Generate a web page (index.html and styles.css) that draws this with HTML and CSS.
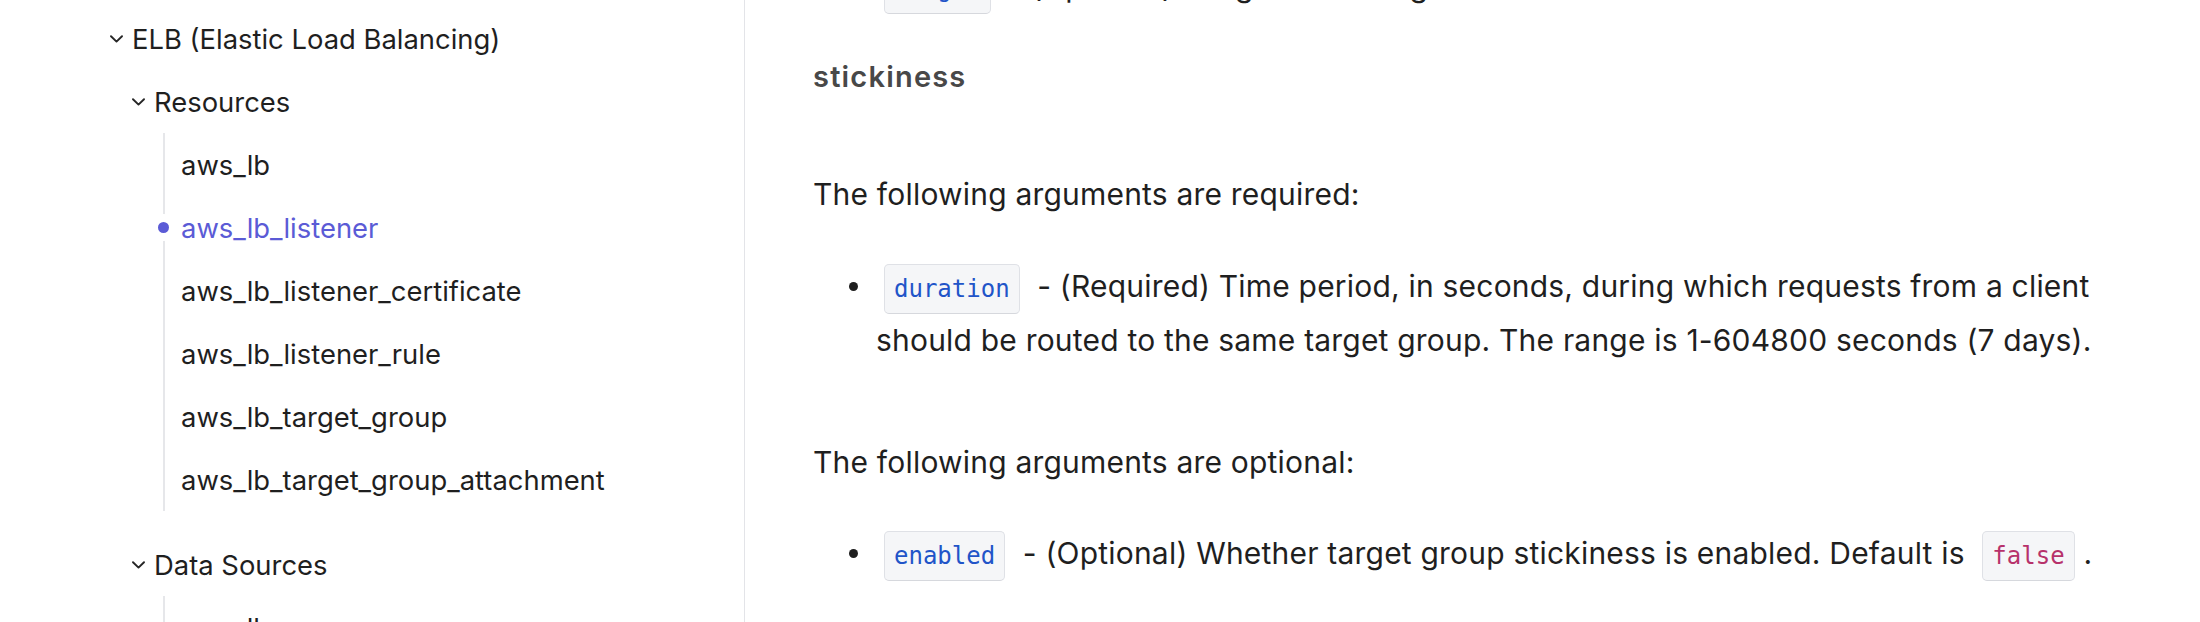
FILE: index.html
```html
<!DOCTYPE html>
<html lang="en">
<head>
<meta charset="utf-8">
<title>aws_lb_listener</title>
<link rel="stylesheet" href="styles.css">
</head>
<body>
<div class="layout">
  <aside class="sidebar">
    <ul class="tree">
      <li>
        <div class="node">
          <svg class="chev" viewBox="0 0 13 8"><path d="M1 1.2 L6.5 6.6 L12 1.2" /></svg>
          <span>ELB (Elastic Load Balancing)</span>
        </div>
        <ul class="sub">
          <li>
            <div class="node">
              <svg class="chev" viewBox="0 0 13 8"><path d="M1 1.2 L6.5 6.6 L12 1.2" /></svg>
              <span>Resources</span>
            </div>
            <ul class="leaves">
              <li>aws_lb</li>
              <li class="active">aws_lb_listener</li>
              <li>aws_lb_listener_certificate</li>
              <li>aws_lb_listener_rule</li>
              <li>aws_lb_target_group</li>
              <li>aws_lb_target_group_attachment</li>
            </ul>
          </li>
          <li>
            <div class="node">
              <svg class="chev" viewBox="0 0 13 8"><path d="M1 1.2 L6.5 6.6 L12 1.2" /></svg>
              <span>Data Sources</span>
            </div>
            <ul class="leaves">
              <li>aws_lb</li>
              <li>aws_lb_listener</li>
            </ul>
          </li>
        </ul>
      </li>
    </ul>
  </aside>
  <main class="content">
    <ul class="args prev">
      <li><span class="li-body"><code class="name">weight</code> - (Optional) Weight. The range is 0 to 999.</span></li>
    </ul>
    <h4 class="arg-head">stickiness</h4>
    <p class="para para-first">The following arguments are required:</p>
    <ul class="args args-req">
      <li><span class="li-body"><code class="name">duration</code> - (Required) Time period, in seconds, during which requests from a client should be routed to the same target group. The range is 1-604800 seconds (7 days).</span></li>
    </ul>
    <p class="para para-opt">The following arguments are optional:</p>
    <ul class="args args-opt">
      <li><span class="li-body"><code class="name">enabled</code> - (Optional) Whether target group stickiness is enabled. Default is <code class="value">false</code>.</span></li>
    </ul>
  </main>
</div>
</body>
</html>
```
FILE: styles.css
```css
html, body {
  margin: 0;
  padding: 0;
  background: #ffffff;
}

body {
  font-family: "Inter", "Noto Sans", sans-serif;
  color: #1f1f1f;
}

.layout {
  display: flex;
  height: 622px;
  overflow: hidden;
}

/* ---------- Sidebar ---------- */
.sidebar {
  width: 745px;
  flex-shrink: 0;
  box-sizing: border-box;
  border-right: 1px solid #e3e4e8;
  padding-top: 7px;
  overflow: hidden;
}

.tree,
.sub,
.leaves {
  list-style: none;
  margin: 0;
}

.tree {
  padding: 0 0 0 110px;
}

.sub {
  padding: 0 0 0 22px;
}

.node {
  display: flex;
  align-items: center;
  gap: 9px;
  height: 63px;
  font-size: 27.4px;
  color: #1f1f1f;
  white-space: nowrap;
}

.chev {
  width: 13px;
  height: 8px;
  flex-shrink: 0;
  fill: none;
  stroke: #262626;
  stroke-width: 1.9;
  stroke-linecap: round;
  stroke-linejoin: round;
}

.leaves {
  margin: 0 0 22px 31px;
  padding: 0 0 0 16px;
  border-left: 2px solid #e6e7ea;
}

.leaves li {
  position: relative;
  display: flex;
  align-items: center;
  height: 63px;
  font-size: 27.4px;
  color: #1f1f1f;
  white-space: nowrap;
}

.leaves li.active {
  color: #5b5bd6;
}

.leaves li.active::before {
  content: "";
  position: absolute;
  left: -23px;
  top: 26px;
  width: 11px;
  height: 11px;
  border-radius: 50%;
  background: #5b5bd6;
  box-shadow: 0 0 0 8px #ffffff;
}

/* ---------- Content ---------- */
.content {
  flex: 1;
  min-width: 0;
  padding: 0 68px;
  font-size: 30px;
  line-height: 54px;
  letter-spacing: 0.2px;
  color: #1f1f1f;
}

.args {
  list-style: none;
  margin: 0;
  padding: 0;
}

.args li {
  display: grid;
  grid-template-columns: 63px 1fr;
}

.args li::before {
  content: "";
  justify-self: start;
  margin-left: 36px;
  margin-top: 23px;
  width: 9px;
  height: 9px;
  border-radius: 50%;
  background: #1f1f1f;
}

.prev {
  margin-top: -41px;
}

.arg-head {
  margin: 43px 0 0;
  font-size: 29px;
  line-height: 42px;
  font-weight: 600;
  letter-spacing: 1.2px;
  color: #484848;
}

.para {
  margin: 0;
}

.para-first {
  margin-top: 69px;
}

.args-req {
  margin-top: 38px;
}

.para-opt {
  margin-top: 68px;
}

.args-opt {
  margin-top: 37px;
}

code {
  font-family: "DejaVu Sans Mono", "Liberation Mono", monospace;
  font-size: 24px;
  line-height: 1;
  letter-spacing: 0;
  padding: 10px 9px;
  margin: 0 9px;
  background: #f5f6f8;
  border: 1px solid #dfe1e6;
  border-bottom-color: #d6d8dd;
  border-radius: 5px;
}

code.name {
  color: #2154c8;
}

code.value {
  color: #b7326b;
}

.li-body > code:first-child {
  margin-left: 8px;
}
```
